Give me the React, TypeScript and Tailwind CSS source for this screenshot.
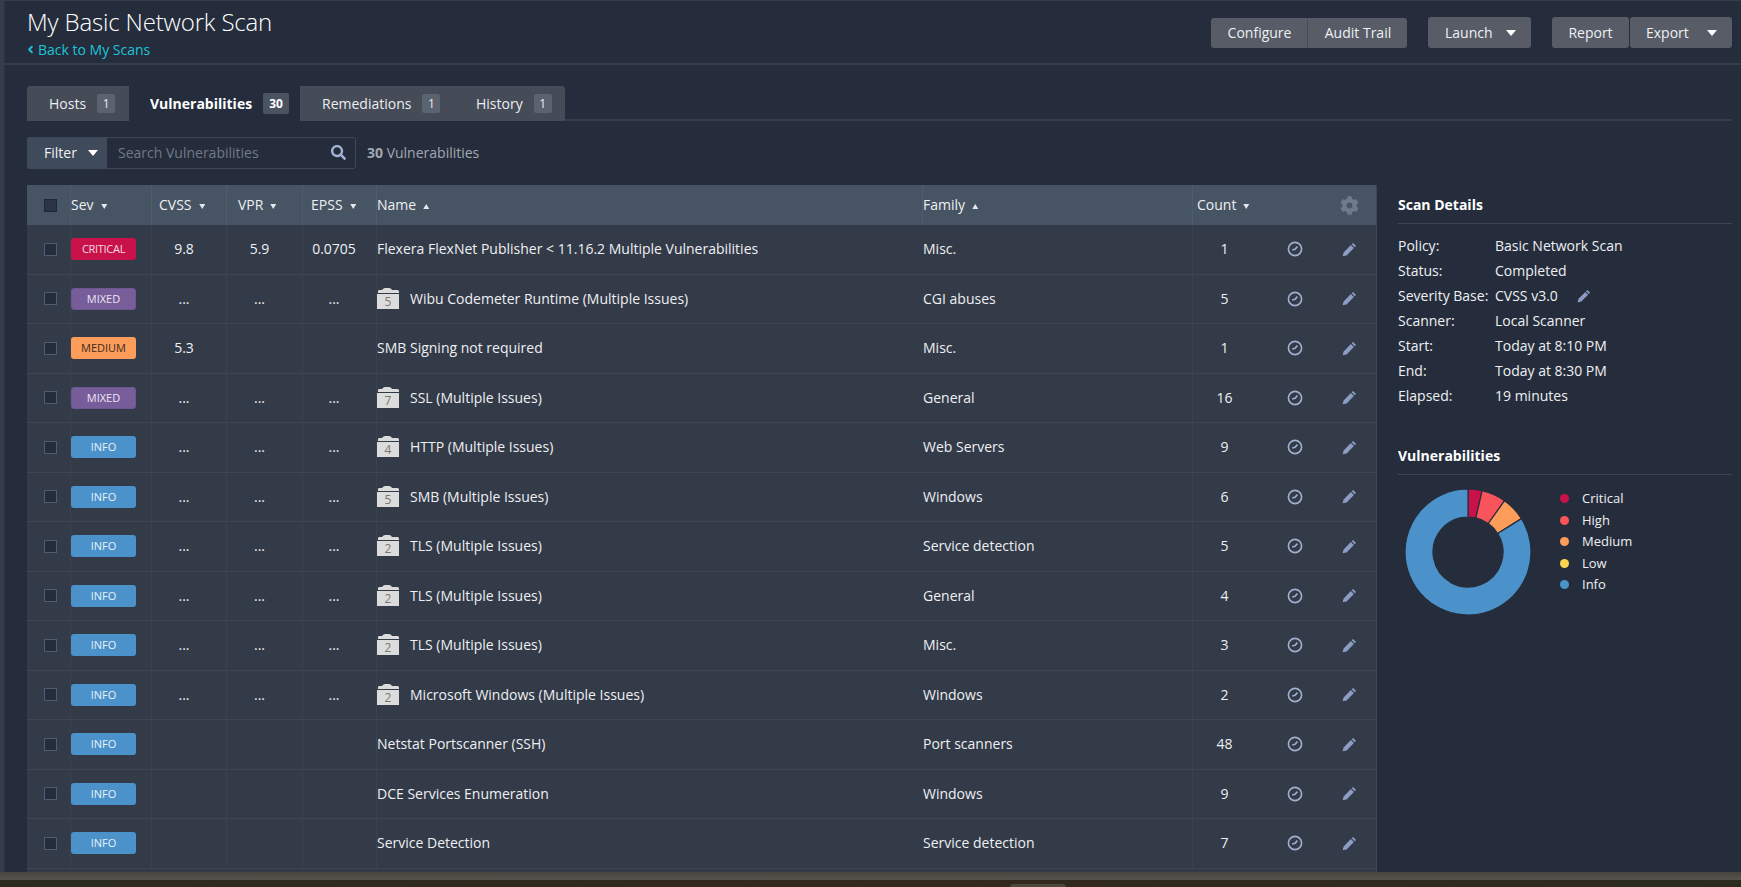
import { ChevronLeft } from "lucide-react";
import { FaCog, FaSearch } from "react-icons/fa";

const font = { fontFamily: '"Open Sans", "Noto Sans", sans-serif' };

type Sev = "critical" | "mixed" | "medium" | "info";

const rows: {
	sev: Sev;
	cvss?: string;
	vpr?: string;
	epss?: string;
	folder?: string;
	name: string;
	family: string;
	count: string;
}[] = [
	{ sev: "critical", cvss: "9.8", vpr: "5.9", epss: "0.0705", name: "Flexera FlexNet Publisher < 11.16.2 Multiple Vulnerabilities", family: "Misc.", count: "1" },
	{ sev: "mixed", cvss: "...", vpr: "...", epss: "...", folder: "5", name: "Wibu Codemeter Runtime (Multiple Issues)", family: "CGI abuses", count: "5" },
	{ sev: "medium", cvss: "5.3", name: "SMB Signing not required", family: "Misc.", count: "1" },
	{ sev: "mixed", cvss: "...", vpr: "...", epss: "...", folder: "7", name: "SSL (Multiple Issues)", family: "General", count: "16" },
	{ sev: "info", cvss: "...", vpr: "...", epss: "...", folder: "4", name: "HTTP (Multiple Issues)", family: "Web Servers", count: "9" },
	{ sev: "info", cvss: "...", vpr: "...", epss: "...", folder: "5", name: "SMB (Multiple Issues)", family: "Windows", count: "6" },
	{ sev: "info", cvss: "...", vpr: "...", epss: "...", folder: "2", name: "TLS (Multiple Issues)", family: "Service detection", count: "5" },
	{ sev: "info", cvss: "...", vpr: "...", epss: "...", folder: "2", name: "TLS (Multiple Issues)", family: "General", count: "4" },
	{ sev: "info", cvss: "...", vpr: "...", epss: "...", folder: "2", name: "TLS (Multiple Issues)", family: "Misc.", count: "3" },
	{ sev: "info", cvss: "...", vpr: "...", epss: "...", folder: "2", name: "Microsoft Windows (Multiple Issues)", family: "Windows", count: "2" },
	{ sev: "info", name: "Netstat Portscanner (SSH)", family: "Port scanners", count: "48" },
	{ sev: "info", name: "DCE Services Enumeration", family: "Windows", count: "9" },
	{ sev: "info", name: "Service Detection", family: "Service detection", count: "7" },
];

const details = [
	["Policy:", "Basic Network Scan"],
	["Status:", "Completed"],
	["Severity Base:", "CVSS v3.0"],
	["Scanner:", "Local Scanner"],
	["Start:", "Today at 8:10 PM"],
	["End:", "Today at 8:30 PM"],
	["Elapsed:", "19 minutes"],
];

const legend = [
	["Critical", "bg-[#c9124a]"],
	["High", "bg-[#f9545b]"],
	["Medium", "bg-[#fd9d59]"],
	["Low", "bg-[#fdd44f]"],
	["Info", "bg-[#4c92ca]"],
];

const gridCols = "grid grid-cols-[43px_81px_75px_76px_74px_547px_269px_66px_64px_55px]";

function Checkbox() {
	return <span className="block h-[13px] w-[13px] border-[1.5px] border-[#4d5d72] bg-[#252d3c]" />;
}

function SevBadge({ sev }: { sev: Sev }) {
	if (sev === "critical")
		return <span className="flex h-[22px] w-[65px] items-center justify-center rounded-[3px] bg-[#c9124a] text-[11px] tracking-[-0.3px] text-[#f3dbe3]">CRITICAL</span>;
	if (sev === "mixed")
		return <span className="flex h-[22px] w-[65px] items-center justify-center rounded-[3px] border border-[#6d5790] bg-[#775d9a] text-[11px] text-[#ece6f4]">MIXED</span>;
	if (sev === "medium")
		return <span className="flex h-[22px] w-[65px] items-center justify-center rounded-[3px] bg-[#fd9d59] text-[11px] text-[#3a2a1e]">MEDIUM</span>;
	return <span className="flex h-[22px] w-[65px] items-center justify-center rounded-[3px] bg-[#4c92ca] text-[11px] text-[#e6f1f9]">INFO</span>;
}

function Caret({ up }: { up?: boolean }) {
	return (
		<svg viewBox="0 0 6 5" className="ml-[7px] mt-[3px] h-[5px] w-[6.5px] fill-[#e4e7ec]">
			<path d={up ? "M3 0L6 5H0z" : "M0 0h6L3 5z"} />
		</svg>
	);
}

function DropCaret() {
	return (
		<svg viewBox="0 0 10 6" className="h-[6px] w-[10px] fill-white">
			<path d="M0 0h10L5 6z" />
		</svg>
	);
}

function Pencil({ className }: { className: string }) {
	return (
		<svg viewBox="0 0 14 14" className={className}>
			<path d="M10.3.9l2.8 2.8-1.3 1.3L9 2.2zM8.3 2.9l2.8 2.8-6.8 6.8L.6 13.4l.9-3.7z" />
		</svg>
	);
}

function ClockCheck() {
	return (
		<svg viewBox="0 0 16 16" className="h-[16px] w-[16px] fill-none stroke-[#a2b0cf]">
			<circle cx="8" cy="8" r="6.6" strokeWidth="1.6" />
			<path d="M5.2 9.1L8 8.2 10.4 5.6" strokeWidth="1.6" />
		</svg>
	);
}

function Folder({ n }: { n: string }) {
	return (
		<span className="relative mr-[11px] block h-[21px] w-[22px] shrink-0">
			<svg viewBox="0 0 22 21" className="h-[21px] w-[22px] fill-[#dcdcdc]">
				<path d="M1 5V3Q1 2 2.5 2H5Q6.5 0 8 0H12Q14 0 15 2H20.5Q22 2 22 3.5V5z" />
				<path d="M0 6H22V21H0z" />
			</svg>
			<span className="absolute inset-x-0 top-[6px] text-center text-[12px] leading-[15px] text-[#777]">{n}</span>
		</span>
	);
}

function Donut() {
	const cx = 64;
	const cy = 64;
	const R = 63;
	const r = 35;
	const seg = (a: number, b: number) => {
		const p = (rad: number, deg: number) => {
			const t = (deg * Math.PI) / 180;
			return `${(cx + rad * Math.sin(t)).toFixed(2)} ${(cy - rad * Math.cos(t)).toFixed(2)}`;
		};
		const large = b - a > 180 ? 1 : 0;
		return `M${p(R, a)}A${R} ${R} 0 ${large} 1 ${p(R, b)}L${p(r, b)}A${r} ${r} 0 ${large} 0 ${p(r, a)}Z`;
	};
	return (
		<svg viewBox="0 0 128 128" className="h-[128px] w-[128px] shrink-0">
			<path d={seg(0, 13)} fill="#c9124a" stroke="#252d3c" strokeWidth="1.2" />
			<path d={seg(13, 35.5)} fill="#f9545b" stroke="#252d3c" strokeWidth="1.2" />
			<path d={seg(35.5, 58)} fill="#fd9d59" stroke="#252d3c" strokeWidth="1.2" />
			<path d={seg(58, 360)} fill="#4c92ca" stroke="#252d3c" strokeWidth="1.2" />
		</svg>
	);
}

function HeadCell({ label, up, className }: { label: string; up?: boolean; className: string }) {
	return (
		<div className={`flex items-center border-l border-[#4f5c6c] pb-[1px] text-[14px] text-[#eef0f3] ${className}`}>
			{label}
			<Caret up={up} />
		</div>
	);
}

function Tab({ label, n, active, className }: { label: string; n: string; active?: boolean; className: string }) {
	if (active)
		return (
			<div className={`flex h-[35px] items-center bg-[#252d3c] text-[14px] font-bold text-white ${className}`}>
				{label}
				<span className="ml-[11px] flex h-[21px] w-[26px] items-center justify-center rounded-[2px] bg-[#4b5361] text-[12px]">{n}</span>
			</div>
		);
	return (
		<div className={`flex h-[34px] items-center text-[14px] text-[#eceef1] ${className}`}>
			{label}
			<span className="ml-[11px] flex h-[19px] w-[18px] items-center justify-center rounded-[2px] bg-[#5c6370] text-[12px]">{n}</span>
		</div>
	);
}

export default function App() {
	return (
		<div style={font} className="flex h-screen flex-col overflow-hidden bg-[#252d3c] text-[14px] text-[#eef0f3]">
			<div className="flex min-h-0 flex-1 overflow-hidden border-t border-[#343c4a]">
				<div className="w-[5px] shrink-0 border-r border-[#2c3442] bg-[#363d4a]" />
				<div className="min-w-0 flex-1">
					<header className="flex h-[64px] items-start justify-between border-b-2 border-[#363e4c] pl-[22px] pr-[9px]">
						<div>
							<h1 className="mt-[4px] text-[24px] font-light leading-[33px] tracking-[-0.16px] text-white">My Basic Network Scan</h1>
							<a className="mt-[2px] flex items-center text-[14px] leading-[19px] text-[#1ec3d8]">
								<ChevronLeft className="-ml-[2px] mr-[2px] h-[13px] w-[11px]" strokeWidth={4} />
								Back to My Scans
							</a>
						</div>
						<div className="mt-[16px] flex items-center">
							<div className="flex h-[30px] w-[196px] rounded-[3px] bg-[#575c67] text-[14px]">
								<span className="flex w-[97px] items-center justify-center border-r border-[#474c57] pl-[1px]">Configure</span>
								<span className="flex flex-1 items-center justify-center pl-[1px]">Audit Trail</span>
							</div>
							<div className="ml-[21px] flex h-[31px] w-[103px] items-center justify-between rounded-[3px] bg-[#575c67] pl-[17px] pr-[15px]">
								Launch
								<DropCaret />
							</div>
							<div className="ml-[21px] flex h-[31px] w-[77px] items-center justify-center rounded-[3px] bg-[#575c67]">Report</div>
							<div className="ml-[1px] flex h-[31px] w-[102px] items-center justify-between rounded-[3px] bg-[#575c67] pl-[16px] pr-[15px]">
								Export
								<DropCaret />
							</div>
						</div>
					</header>

					<div className="pl-[22px] pr-[9px]">
						<div className="mt-[21px] flex h-[35px] items-end border-b-2 border-[#363e4c]">
							<div className="-mb-[2px] flex items-end">
								<div className="flex h-[35px] items-center rounded-tl-[3px] bg-[#454b57]">
									<Tab label="Hosts" n="1" className="w-[102px] pl-[22px]" />
								</div>
								<Tab label="Vulnerabilities" n="30" active className="w-[171px] pl-[21px]" />
								<div className="flex h-[35px] items-center rounded-tr-[3px] bg-[#454b57]">
									<Tab label="Remediations" n="1" className="w-[154px] pl-[22px]" />
									<Tab label="History" n="1" className="w-[111px] pl-[22px]" />
								</div>
							</div>
						</div>

						<div className="mt-[16px] flex items-center">
							<div className="flex h-[32px] w-[329px] rounded-[3px] border border-[#3f4857]">
								<div className="-my-px -ml-px flex w-[80px] items-center justify-between rounded-l-[3px] bg-[#3f4a5b] pb-[1px] pl-[17px] pr-[9px]">
									Filter
									<DropCaret />
								</div>
								<div className="flex flex-1 items-center justify-between pb-[1px] pl-[11px] pr-[9px] text-[#717987]">
									Search Vulnerabilities
									<FaSearch className="h-[15px] w-[15px] text-[#a3b4d6]" />
								</div>
							</div>
							<span className="ml-[11px] pb-[1px] text-[#a2a8b2]">
								<b className="font-bold">30</b> Vulnerabilities
							</span>
						</div>

						<div className="mt-[16px] flex items-start">
							<div className="w-[1350px] shrink-0 border-r border-[#3e4654]">
								<div className={`${gridCols} h-[40px] bg-[#475463]`}>
									<div className="flex items-center justify-center pl-[3px]"><span className="block h-[13px] w-[13px] border-[1.5px] border-[#1f2836] bg-[#2b3546]" /></div>
									<HeadCell label="Sev" className="" />
									<HeadCell label="CVSS" className="pl-[7px]" />
									<HeadCell label="VPR" className="pl-[11px]" />
									<HeadCell label="EPSS" className="pl-[8px]" />
									<HeadCell label="Name" up className="" />
									<HeadCell label="Family" up className="-ml-px" />
									<HeadCell label="Count" className="pl-[4px]" />
									<div />
									<div className="flex items-center justify-center pr-[1px]"><FaCog className="h-[19px] w-[19px] text-[#6f7b8a]" /></div>
								</div>
								{rows.map((r, i) => (
									<div key={i} className={`${gridCols} h-[49.5px] border-b border-[#3f4653] bg-[#333a48]`}>
										<div className="flex items-center justify-center pl-[3px]"><Checkbox /></div>
										<div className="flex items-center border-l border-[#3a4250]"><SevBadge sev={r.sev} /></div>
										<div className="flex items-center justify-center border-l border-[#3a4250] pb-[1px] pr-[10px]">{r.cvss}</div>
										<div className="flex items-center justify-center border-l border-[#3a4250] pb-[1px] pr-[10px]">{r.vpr}</div>
										<div className="flex items-center justify-center border-l border-[#3a4250] pb-[1px] pr-[11px]">{r.epss}</div>
										<div className="flex items-center border-l border-[#3a4250] pb-[1px]">
											{r.folder && <Folder n={r.folder} />}
											{r.name}
										</div>
										<div className="flex items-center pb-[1px]">{r.family}</div>
										<div className="flex items-center justify-center border-l border-[#3a4250] pb-[1px] pr-[2px]">{r.count}</div>
										<div className="flex items-center justify-center pl-[9px]"><ClockCheck /></div>
										<div className="flex items-center justify-center pr-[1px]"><Pencil className="h-[15px] w-[15px] fill-[#8d9cc4]" /></div>
									</div>
								))}
								<div className="h-[20px] bg-[#333a48]" />
							</div>

							<aside className="ml-[21px] min-w-0 flex-1">
								<h2 className="flex h-[39px] items-center border-b border-[#3f4653] text-[14px] font-bold text-white">Scan Details</h2>
								<div className="mt-[9px]">
									{details.map(([k, v]) => (
										<div key={k} className="flex h-[25px] items-center">
											<span className="w-[97px] shrink-0">{k}</span>
											<span className="flex items-center">
												{v}
												{k === "Severity Base:" && <Pencil className="ml-[19px] h-[14px] w-[14px] fill-[#8d9cc4]" />}
											</span>
										</div>
									))}
								</div>
								<h2 className="mt-[28px] flex h-[39px] items-center border-b border-[#3f4653] text-[14px] font-bold text-white">Vulnerabilities</h2>
								<div className="mt-[13px] flex items-start pl-[6px]">
									<Donut />
									<div className="ml-[28px] flex flex-col text-[13px]">
										{legend.map(([label, dot]) => (
											<div key={label} className="flex h-[21.5px] items-center">
												<span className={`h-[9px] w-[9px] rounded-full ${dot}`} />
												<span className="ml-[13px]">{label}</span>
											</div>
										))}
									</div>
								</div>
							</aside>
						</div>
					</div>
				</div>
			</div>
			<div className="relative h-[15px] shrink-0 bg-gradient-to-r from-[#2b2b20] via-[#33281d] to-[#2b2b20]">
				<div className="h-[8px] bg-gradient-to-b from-[#45443f] to-[#55534a]" />
				<div className="absolute bottom-0 left-[1010px] h-[3px] w-[56px] rounded-t-[3px] bg-[#4a4a3c]" />
			</div>
		</div>
	);
}
